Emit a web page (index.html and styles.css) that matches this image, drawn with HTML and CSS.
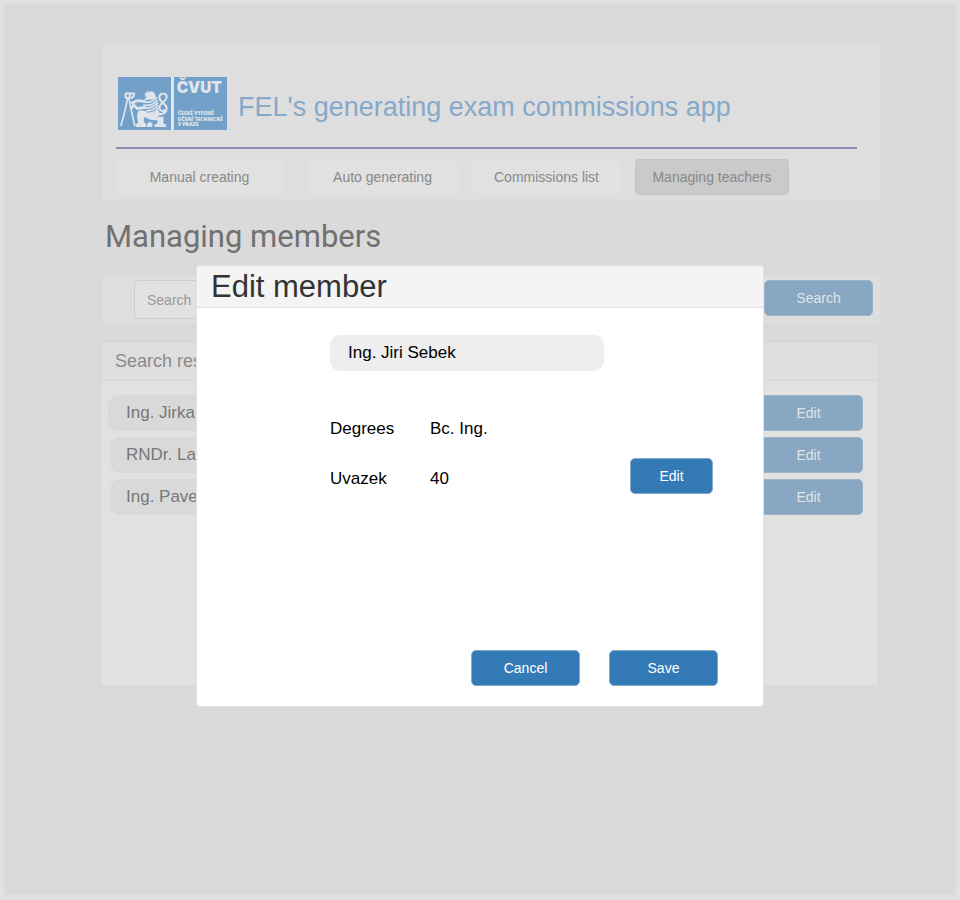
FILE: index.html
```html
<!DOCTYPE html>
<html lang="en">
<head>
<meta charset="utf-8">
<meta name="viewport" content="width=device-width, initial-scale=1">
<title>FEL's generating exam commissions app</title>
<link rel="stylesheet" href="styles.css">
</head>
<body>
<div class="screen">
  <header class="card masthead">
    <div class="brand">
      <svg class="logo" viewBox="0 0 327 159" role="img" aria-label="ČVUT">
        <rect width="327" height="159" fill="#73a0c8"/>
        <rect x="159" width="9" height="159" fill="#e3e7ea"/>
        <g fill="none" stroke="#dfe5ea" stroke-linecap="round" stroke-linejoin="round">
          <circle cx="29" cy="56" r="7" stroke-width="6"/>
          <path d="M29 64L20 105L9 145M33 65L41 105L50 145" stroke-width="5"/>
          <path d="M37 49L49 50L46 59L40 63" stroke-width="6"/>
          <path d="M80 73L58 71L43 77M80 91L58 95L47 84L40 94" stroke-width="8"/>
          <path d="M82 66C94 68 104 64 111 58M78 75C92 78 108 72 116 62M77 84C94 87 110 80 118 70M80 93C95 95 112 87 119 78M85 102C98 102 113 95 119 86M94 109C104 108 114 102 119 95" stroke-width="5"/>
          <path d="M118 111C132 114 147 107 146 93C145 80 125 76 124 62C124 56 127 51 132 50M138 50C144 51 147 56 146 62C144 74 125 79 124 91C124 101 133 104 139 100" stroke-width="6"/>
        </g>
        <g fill="#dfe5ea">
          <path d="M82 54L79 50L86 47L88 42L94 46L98 41L102 46L108 43L108 49L114 52L110 57L113 63L104 67L93 66L85 69L80 64L90 60L81 59Z"/>
          <path d="M60 103C68 97 80 100 90 107C102 113 112 107 120 99C127 106 126 116 119 119L137 119L136 138L145 144L144 150H111L108 144L119 138L118 130L101 129C90 126 84 121 79 120L77 132L85 143L83 150H55L51 144L60 137L57 117Z"/>
          <path d="M88 139L98 134L104 141L102 150H86Z"/>
        </g>
        <g class="logo-text">
          <text class="logo-name" x="176" y="48">ČVUT</text>
          <text class="logo-line" x="179" y="114">ČESKÉ VYSOKÉ</text>
          <text class="logo-line" x="179" y="131">UČENÍ TECHNICKÉ</text>
          <text class="logo-line" x="179" y="148">V PRAZE</text>
        </g>
      </svg>
      <div class="app-title">FEL's generating exam commissions app</div>
    </div>
    <nav class="nav">
      <a class="nav-item nav-wide" href="#">Manual creating</a>
      <a class="nav-item" href="#">Auto generating</a>
      <a class="nav-item" href="#">Commissions list</a>
      <a class="nav-item nav-active" href="#" aria-current="page">Managing teachers</a>
    </nav>
  </header>

  <main>
    <h1 class="page-title">Managing members</h1>
    <form class="card search">
      <input class="search-input" type="text" placeholder="Search" aria-label="Search members">
      <button class="button button-dim" type="button">Search</button>
    </form>
    <section class="card results">
      <h2 class="results-title">Search results</h2>
      <ul class="members">
        <li class="member"><span class="member-name">Ing. Jirka</span><button class="button button-dim" type="button">Edit</button></li>
        <li class="member"><span class="member-name">RNDr. La</span><button class="button button-dim" type="button">Edit</button></li>
        <li class="member"><span class="member-name">Ing. Pavel</span><button class="button button-dim" type="button">Edit</button></li>
      </ul>
    </section>
  </main>
</div>

<div class="modal" role="dialog" aria-modal="true" aria-labelledby="modal-title">
  <h2 class="modal-title" id="modal-title">Edit member</h2>
  <div class="modal-body">
    <input class="name-field" type="text" value="Ing. Jiri Sebek" aria-label="Member name">
    <div class="field"><span class="field-label">Degrees</span><span>Bc. Ing.</span></div>
    <div class="field"><span class="field-label">Uvazek</span><span>40</span><button class="button button-small" type="button">Edit</button></div>
  </div>
  <div class="modal-actions">
    <button class="button" type="button">Cancel</button>
    <button class="button" type="button">Save</button>
  </div>
</div>
</body>
</html>
```
FILE: styles.css
```css
* {
  box-sizing: border-box;
}

body {
  margin: 0;
  min-height: 100vh;
  padding: 4px 4px 5px;
  display: flex;
  position: relative;
  background: #e1e1e1;
  font-family: "Liberation Sans", Arial, sans-serif;
  font-size: 17px;
  color: #000;
}

h1, h2, ul {
  margin: 0;
  padding: 0;
  font-weight: 400;
}

input, button {
  font-family: inherit;
}

.screen {
  flex: 1;
  padding: 39px 74px 39px 96px;
  background: #dadada;
}

.card {
  border: 1px solid #d6d6d6;
  border-radius: 5px;
  background: #dedede;
}

.masthead {
  padding: 33px 24px 6px 15px;
}

.brand {
  display: flex;
  align-items: flex-start;
  gap: 11px;
  padding: 0 0 10px 2px;
  border-bottom: 2px solid #898eb1;
}

.logo {
  flex: none;
  width: 109px;
  height: 53px;
}

.logo-text {
  fill: #dfe5ea;
  font-family: "Open Sans", sans-serif;
  font-weight: 800;
}

.logo-name {
  font-family: Inter, sans-serif;
  font-size: 46px;
  font-weight: 900;
}

.logo-line {
  font-size: 15px;
}

.app-title {
  color: #86a9c9;
  font-size: 27px;
  line-height: 60px;
}

.nav {
  display: flex;
  align-items: center;
  gap: 13px;
  padding-top: 10px;
}

.nav-item {
  flex: 0 1 151px;
  border-radius: 4px;
  background: #e1e1e1;
  color: #888;
  font-size: 14px;
  line-height: 34px;
  text-align: center;
  text-decoration: none;
  white-space: nowrap;
}

.nav-wide {
  flex-basis: 167px;
  margin-right: 11px;
}

.nav-active {
  flex-basis: 154px;
  border: 1px solid #c5c5c5;
  background: #cacaca;
}

.page-title {
  padding: 0 0 2px 5px;
  color: #717171;
  font-family: Roboto, sans-serif;
  font-size: 31px;
  line-height: 70px;
}

.search {
  display: flex;
  align-items: flex-start;
  justify-content: space-between;
  padding: 5px 8px 6px 33px;
}

.search-input {
  width: 500px;
  height: 39px;
  padding: 0 12px;
  border: 1px solid #cdcdcd;
  border-radius: 4px;
  background: #e1e1e1;
  color: #888;
  font-size: 14px;
}

.search-input::placeholder {
  color: #999;
  opacity: 1;
}

.button {
  width: 109px;
  height: 36px;
  padding: 0;
  border: 1px solid #83abcf;
  border-radius: 5px;
  background: #337ab7;
  color: #fff;
  font-size: 14px;
}

.button-dim {
  border-color: #9db3c6;
  background: #88a7c2;
  color: #e1e4e7;
}

.results {
  min-height: 346px;
  margin: 15px 3px 0 0;
  background: #e1e1e1;
}

.results-title {
  padding-left: 14px;
  border-bottom: 1px solid #d4d4d4;
  background: #dedede;
  color: #8b8b8b;
  font-size: 18px;
  line-height: 38px;
}

.members {
  display: grid;
  gap: 6px;
  padding: 14px 15px 14px 7px;
  list-style: none;
}

.member {
  display: flex;
  justify-content: space-between;
}

.member-name {
  width: 300px;
  padding-left: 18px;
  border-radius: 10px;
  background: #d9d9d9;
  color: #777;
  line-height: 36px;
}

.member + .member .member-name {
  margin-left: 2px;
  padding-left: 16px;
}

.modal {
  position: absolute;
  top: 265px;
  left: 0;
  right: 0;
  width: 568px;
  max-width: 100%;
  min-height: 442px;
  margin: 0 auto;
  display: flex;
  flex-direction: column;
  border: 1px solid #e4e4e4;
  border-radius: 4px;
  background: #fff;
}

.modal-title {
  padding-left: 14px;
  border-bottom: 1px solid #e0e0e0;
  border-radius: 4px 4px 0 0;
  background: #f4f4f4;
  color: #333;
  font-size: 31px;
  line-height: 41px;
}

.modal-body {
  flex: 1;
  padding: 27px 50px 0 133px;
}

.name-field {
  display: block;
  width: 274px;
  height: 36px;
  margin-bottom: 37px;
  padding: 0 18px;
  border: 0;
  border-radius: 10px;
  background: #eee;
  color: #000;
  font-size: 17px;
}

.field {
  display: flex;
  align-items: flex-start;
  height: 50px;
  line-height: 42px;
}

.field-label {
  width: 100px;
}

.button-small {
  width: 83px;
  margin-left: auto;
}

.modal-actions {
  display: flex;
  justify-content: flex-end;
  gap: 29px;
  padding: 0 45px 20px;
}
```
